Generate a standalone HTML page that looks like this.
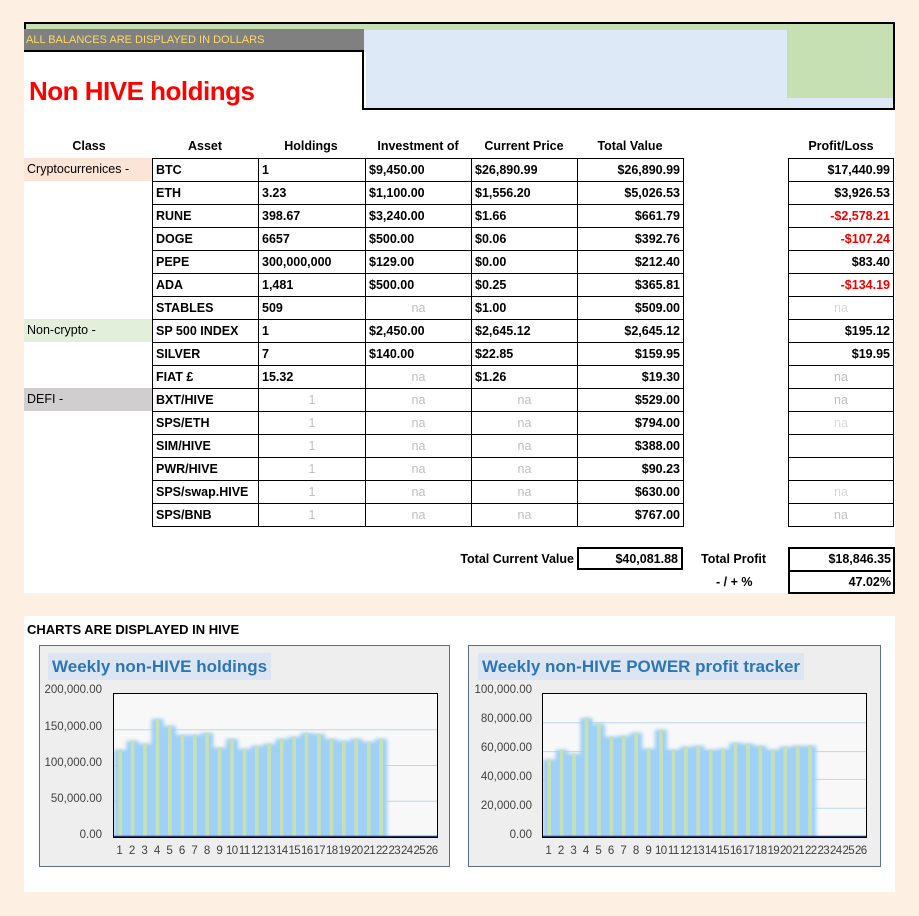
<!DOCTYPE html>
<html><head><meta charset="utf-8"><style>
*{margin:0;padding:0;box-sizing:border-box}
body{width:919px;height:916px;background:#fdefe1;position:relative;overflow:hidden;font-family:"Liberation Sans Narrow","Liberation Sans",sans-serif;color:#000}
.abs{position:absolute}
#top{left:24px;top:22px;width:871px;height:571px;background:#fff}
table{border-collapse:collapse;table-layout:fixed;position:absolute}
td{border:1px solid #000;height:23px;font-size:12.5px;font-weight:bold;padding:0 3px;white-space:nowrap;overflow:hidden;line-height:21px}
.r{text-align:right}.c{text-align:center}
.na{color:#bfbfbf;font-weight:normal;text-align:center}
.neg{color:#e00}
.hd{font-size:12.5px;font-weight:bold;text-align:center;top:139px;width:106px}
.cl{font-size:12.5px;left:24px;width:128px;height:23px;line-height:23px;padding-left:3px}
.chart{background:#eeeeee;border:1.5px solid #5b6f85}
.ct{background:#dce6f2;color:#2e75b6;font-weight:bold;font-size:17px;font-family:"Liberation Sans",sans-serif;padding:0 4px;height:27px;line-height:27px}
.yl{font-size:11.5px;font-family:"Liberation Sans",sans-serif;color:#404040;text-align:right;width:70px}
.xl{font-size:11.5px;font-family:"Liberation Sans",sans-serif;color:#404040;display:flex}
.xl span{flex:1;text-align:center;letter-spacing:-0.6px}
</style></head><body>
<div id="top" class="abs"></div>
<div class="abs" style="left:24px;top:22px;width:871px;height:88px;border:2px solid #000;background:#dde9f6"></div>
<div class="abs" style="left:26px;top:24px;width:867px;height:6px;background:#c6dfb3"></div>
<div class="abs" style="left:787px;top:24px;width:106px;height:74px;background:#c6dfb3"></div>
<div class="abs" style="left:24px;top:29px;width:340px;height:23px;background:#808080;border-bottom:2px solid #000;color:#ffd966;font-size:11px;line-height:23px;padding-left:2px">ALL BALANCES ARE DISPLAYED IN DOLLARS</div>
<div class="abs" style="left:24px;top:52px;width:342px;height:58px;background:#fff"></div>
<div class="abs" style="left:24px;top:110px;width:871px;height:2px;background:#fff"></div>
<div class="abs" style="left:362px;top:108px;width:533px;height:2px;background:#000"></div>
<div class="abs" style="left:362px;top:50px;width:2px;height:60px;background:#000"></div>
<div class="abs" style="left:893px;top:22px;width:2px;height:88px;background:#000"></div>
<div class="abs" style="left:29px;top:76px;color:#f00;font-size:26px;font-weight:bold;font-family:'Liberation Sans',sans-serif;letter-spacing:-0.5px">Non HIVE holdings</div>

<div class="abs hd" style="left:36px;width:106px">Class</div>
<div class="abs hd" style="left:152px">Asset</div>
<div class="abs hd" style="left:258px">Holdings</div>
<div class="abs hd" style="left:365px">Investment of</div>
<div class="abs hd" style="left:471px">Current Price</div>
<div class="abs hd" style="left:577px">Total Value</div>
<div class="abs hd" style="left:788px">Profit/Loss</div>

<div class="abs cl" style="top:158px;background:#fce4d6">Cryptocurrenices -</div>
<div class="abs cl" style="top:319px;background:#e2efda">Non-crypto -</div>
<div class="abs cl" style="top:388px;background:#d0cece">DEFI -</div>

<table style="left:152px;top:158px;width:531px">
<colgroup><col style="width:106px"><col style="width:107px"><col style="width:106px"><col style="width:106px"><col style="width:106px"></colgroup>
<tr><td>BTC</td><td>1</td><td>$9,450.00</td><td>$26,890.99</td><td class="r">$26,890.99</td></tr>
<tr><td>ETH</td><td>3.23</td><td>$1,100.00</td><td>$1,556.20</td><td class="r">$5,026.53</td></tr>
<tr><td>RUNE</td><td>398.67</td><td>$3,240.00</td><td>$1.66</td><td class="r">$661.79</td></tr>
<tr><td>DOGE</td><td>6657</td><td>$500.00</td><td>$0.06</td><td class="r">$392.76</td></tr>
<tr><td>PEPE</td><td>300,000,000</td><td>$129.00</td><td>$0.00</td><td class="r">$212.40</td></tr>
<tr><td>ADA</td><td>1,481</td><td>$500.00</td><td>$0.25</td><td class="r">$365.81</td></tr>
<tr><td>STABLES</td><td>509</td><td class="na">na</td><td>$1.00</td><td class="r">$509.00</td></tr>
<tr><td>SP 500 INDEX</td><td>1</td><td>$2,450.00</td><td>$2,645.12</td><td class="r">$2,645.12</td></tr>
<tr><td>SILVER</td><td>7</td><td>$140.00</td><td>$22.85</td><td class="r">$159.95</td></tr>
<tr><td>FIAT £</td><td>15.32</td><td class="na">na</td><td>$1.26</td><td class="r">$19.30</td></tr>
<tr><td>BXT/HIVE</td><td class="na">1</td><td class="na">na</td><td class="na">na</td><td class="r">$529.00</td></tr>
<tr><td>SPS/ETH</td><td class="na">1</td><td class="na">na</td><td class="na">na</td><td class="r">$794.00</td></tr>
<tr><td>SIM/HIVE</td><td class="na">1</td><td class="na">na</td><td class="na">na</td><td class="r">$388.00</td></tr>
<tr><td>PWR/HIVE</td><td class="na">1</td><td class="na">na</td><td class="na">na</td><td class="r">$90.23</td></tr>
<tr><td>SPS/swap.HIVE</td><td class="na">1</td><td class="na">na</td><td class="na">na</td><td class="r">$630.00</td></tr>
<tr><td>SPS/BNB</td><td class="na">1</td><td class="na">na</td><td class="na">na</td><td class="r">$767.00</td></tr>
</table>
<table style="left:788px;top:158px;width:106px">
<tr><td class="r">$17,440.99</td></tr>
<tr><td class="r">$3,926.53</td></tr>
<tr><td class="r neg">-$2,578.21</td></tr>
<tr><td class="r neg">-$107.24</td></tr>
<tr><td class="r">$83.40</td></tr>
<tr><td class="r neg">-$134.19</td></tr>
<tr><td class="na" style="color:#d9d9d9">na</td></tr>
<tr><td class="r">$195.12</td></tr>
<tr><td class="r">$19.95</td></tr>
<tr><td class="na">na</td></tr>
<tr><td class="na">na</td></tr>
<tr><td class="na" style="color:#d9d9d9">na</td></tr>
<tr><td></td></tr>
<tr><td></td></tr>
<tr><td class="na" style="color:#d9d9d9">na</td></tr>
<tr><td class="na">na</td></tr>
</table>

<div class="abs" style="left:430px;top:552px;width:144px;text-align:right;font-size:12.5px;font-weight:bold">Total Current Value</div>
<div class="abs r" style="left:577px;top:547px;width:106px;height:23px;border:2px solid #000;font-size:12.5px;font-weight:bold;line-height:21px;padding-right:3px">$40,081.88</div>
<div class="abs" style="left:701px;top:552px;font-size:12.5px;font-weight:bold">Total Profit</div>
<div class="abs" style="left:716px;top:575px;font-size:12.5px;font-weight:bold">- / + %</div>
<div class="abs r" style="left:788px;top:547px;width:107px;height:47px;border:2px solid #000;font-size:12.5px;font-weight:bold;line-height:21px;padding-right:2px">$18,846.35<div style="border-top:2px solid #000;line-height:21px">47.02%</div></div>

<div class="abs" style="left:24px;top:616px;width:871px;height:276px;background:#fff"></div>
<div class="abs" style="left:27px;top:622px;font-size:13px;font-weight:bold;font-family:'Liberation Sans',sans-serif">CHARTS ARE DISPLAYED IN HIVE</div>

<svg width="0" height="0" style="position:absolute"><defs><filter id="bl" x="-0.1" y="-0.1" width="1.2" height="1.2"><feGaussianBlur stdDeviation="0.15 2"/></filter></defs></svg>

<!-- left chart -->
<div class="abs chart" style="left:39px;top:645px;width:411px;height:222px"></div>
<div class="abs ct" style="left:48px;top:653px">Weekly non-HIVE holdings</div>
<div class="abs yl" style="left:32px;top:684px">200,000.00</div>
<div class="abs yl" style="left:32px;top:721px">150,000.00</div>
<div class="abs yl" style="left:32px;top:757px">100,000.00</div>
<div class="abs yl" style="left:32px;top:793px">50,000.00</div>
<div class="abs yl" style="left:32px;top:829px">0.00</div>
<svg class="abs" style="left:113px;top:693px;background:#f8f8f8;border:1px solid #000" width="325" height="145" viewBox="0 0 26 144" preserveAspectRatio="none">
<g stroke="#bcd7ea"><line x1="0" y1="36" x2="26" y2="36" vector-effect="non-scaling-stroke"/><line x1="0" y1="72" x2="26" y2="72" vector-effect="non-scaling-stroke"/><line x1="0" y1="108" x2="26" y2="108" vector-effect="non-scaling-stroke"/></g>
<path fill="#9fd0f7" filter="url(#bl)" d="M0,146 V56 H1 V47 H2 V50 H3 V25 H4 V32 H5 V41 H6 V41 H7 V39 H8 V54 H9 V45 H10 V55 H11 V52 H12 V50 H13 V45 H14 V43 H15 V39 H16 V40 H17 V45 H18 V47 H19 V45 H20 V48 H21 V45 H22 V146 Z"/>
<g fill="#c5e0b4">
<rect x="0.35" y="56" width="0.3" height="88"/><rect x="1.35" y="47" width="0.3" height="97"/><rect x="2.35" y="50" width="0.3" height="94"/><rect x="3.35" y="25" width="0.3" height="119"/><rect x="4.35" y="32" width="0.3" height="112"/><rect x="5.35" y="41" width="0.3" height="103"/><rect x="6.35" y="41" width="0.3" height="103"/><rect x="7.35" y="39" width="0.3" height="105"/><rect x="8.35" y="54" width="0.3" height="90"/><rect x="9.35" y="45" width="0.3" height="99"/><rect x="10.35" y="55" width="0.3" height="89"/><rect x="11.35" y="52" width="0.3" height="92"/><rect x="12.35" y="50" width="0.3" height="94"/><rect x="13.35" y="45" width="0.3" height="99"/><rect x="14.35" y="43" width="0.3" height="101"/><rect x="15.35" y="39" width="0.3" height="105"/><rect x="16.35" y="40" width="0.3" height="104"/><rect x="17.35" y="45" width="0.3" height="99"/><rect x="18.35" y="47" width="0.3" height="97"/><rect x="19.35" y="45" width="0.3" height="99"/><rect x="20.35" y="48" width="0.3" height="96"/><rect x="21.35" y="45" width="0.3" height="99"/>
</g>
<line x1="0" y1="143.5" x2="26" y2="143.5" stroke="#1f3864" stroke-width="1.5" vector-effect="non-scaling-stroke"/>
</svg>
<div class="abs xl" style="left:113px;top:845px;width:325px"><span>1</span><span>2</span><span>3</span><span>4</span><span>5</span><span>6</span><span>7</span><span>8</span><span>9</span><span>10</span><span>11</span><span>12</span><span>13</span><span>14</span><span>15</span><span>16</span><span>17</span><span>18</span><span>19</span><span>20</span><span>21</span><span>22</span><span>23</span><span>24</span><span>25</span><span>26</span></div>

<!-- right chart -->
<div class="abs chart" style="left:468px;top:645px;width:413px;height:222px"></div>
<div class="abs ct" style="left:478px;top:653px">Weekly non-HIVE POWER profit tracker</div>
<div class="abs yl" style="left:462px;top:684px">100,000.00</div>
<div class="abs yl" style="left:462px;top:713px">80,000.00</div>
<div class="abs yl" style="left:462px;top:742px">60,000.00</div>
<div class="abs yl" style="left:462px;top:771px">40,000.00</div>
<div class="abs yl" style="left:462px;top:800px">20,000.00</div>
<div class="abs yl" style="left:462px;top:829px">0.00</div>
<svg class="abs" style="left:542px;top:693px;background:#f8f8f8;border:1px solid #000" width="325" height="145" viewBox="0 0 26 144" preserveAspectRatio="none">
<g stroke="#bcd7ea"><line x1="0" y1="29" x2="26" y2="29" vector-effect="non-scaling-stroke"/><line x1="0" y1="58" x2="26" y2="58" vector-effect="non-scaling-stroke"/><line x1="0" y1="86" x2="26" y2="86" vector-effect="non-scaling-stroke"/><line x1="0" y1="115" x2="26" y2="115" vector-effect="non-scaling-stroke"/></g>
<path fill="#9fd0f7" filter="url(#bl)" d="M0,146 V66 H1 V56 H2 V60 H3 V24 H4 V30 H5 V43 H6 V42 H7 V39 H8 V55 H9 V36 H10 V56 H11 V53 H12 V52 H13 V56 H14 V55 H15 V49 H16 V50 H17 V52 H18 V56 H19 V53 H20 V52 H21 V52 H22 V146 Z"/>
<g fill="#c5e0b4">
<rect x="0.35" y="66" width="0.3" height="78"/><rect x="1.35" y="56" width="0.3" height="88"/><rect x="2.35" y="60" width="0.3" height="84"/><rect x="3.35" y="24" width="0.3" height="120"/><rect x="4.35" y="30" width="0.3" height="114"/><rect x="5.35" y="43" width="0.3" height="101"/><rect x="6.35" y="42" width="0.3" height="102"/><rect x="7.35" y="39" width="0.3" height="105"/><rect x="8.35" y="55" width="0.3" height="89"/><rect x="9.35" y="36" width="0.3" height="108"/><rect x="10.35" y="56" width="0.3" height="88"/><rect x="11.35" y="53" width="0.3" height="91"/><rect x="12.35" y="52" width="0.3" height="92"/><rect x="13.35" y="56" width="0.3" height="88"/><rect x="14.35" y="55" width="0.3" height="89"/><rect x="15.35" y="49" width="0.3" height="95"/><rect x="16.35" y="50" width="0.3" height="94"/><rect x="17.35" y="52" width="0.3" height="92"/><rect x="18.35" y="56" width="0.3" height="88"/><rect x="19.35" y="53" width="0.3" height="91"/><rect x="20.35" y="52" width="0.3" height="92"/><rect x="21.35" y="52" width="0.3" height="92"/>
</g>
<line x1="0" y1="143.5" x2="26" y2="143.5" stroke="#1f3864" stroke-width="1.5" vector-effect="non-scaling-stroke"/>
</svg>
<div class="abs xl" style="left:542px;top:845px;width:325px"><span>1</span><span>2</span><span>3</span><span>4</span><span>5</span><span>6</span><span>7</span><span>8</span><span>9</span><span>10</span><span>11</span><span>12</span><span>13</span><span>14</span><span>15</span><span>16</span><span>17</span><span>18</span><span>19</span><span>20</span><span>21</span><span>22</span><span>23</span><span>24</span><span>25</span><span>26</span></div>
</body></html>
